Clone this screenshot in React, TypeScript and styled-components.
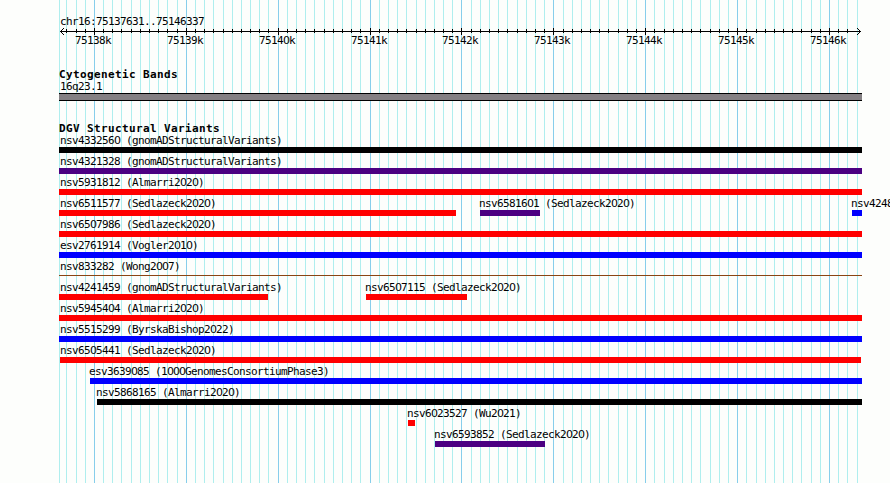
import React from "react";
import styled, { createGlobalStyle } from "styled-components";

const GlobalStyle = createGlobalStyle`
  body { margin: 0; background: #fdfefc; }
`;

const LEFT = 59;
const RIGHT = 862;

const Page = styled.main`
  position: relative;
  width: 890px;
  height: 483px;
  overflow: hidden;
  color: #000;
  font-family: "DejaVu Sans Mono", monospace;
  font-size: 11px;
  line-height: 13px;
  letter-spacing: -0.6225px;
  white-space: pre;
`;

const GridLines = styled.svg`
  position: absolute;
  inset: 0;
  shape-rendering: crispEdges;
`;

const Tracks = styled.div`
  position: relative;
  display: flex;
  flex-direction: column;
  width: ${RIGHT - LEFT}px;
  padding: 15px 0 0 ${LEFT}px;
`;

const Region = styled.div`
  height: 13px;
  padding-left: 1px;
`;

const Scale = styled.svg`
  display: block;
  height: 7px;
  shape-rendering: crispEdges;
`;

const ScaleLabels = styled.div`
  display: flex;
  height: 13px;
  margin-top: -1px;
`;

const ScaleLabel = styled.span<{ $gap: number }>`
  flex: none;
  width: 36px;
  margin-left: ${(p) => p.$gap}px;
`;

const Track = styled.section<{ $top: number }>`
  margin-top: ${(p) => p.$top}px;
`;

const Title = styled.h2`
  height: 12px;
  margin: 0;
  font-size: 11px;
  line-height: 13px;
  font-weight: bold;
  letter-spacing: 0.3775px;
`;

const Band = styled.div`
  height: 6px;
  border: solid #000;
  border-width: 1px 0;
  background: #848083;
`;

const Lane = styled.div`
  display: flex;
  height: 21px;
`;

const Feature = styled.div<{ $gap: number; $width: number }>`
  flex: none;
  width: ${(p) => p.$width}px;
  margin-left: ${(p) => p.$gap}px;
`;

const Name = styled.div<{ $shift: number }>`
  height: 13px;
  margin-left: ${(p) => p.$shift}px;
`;

const Bar = styled.div<{ $color: string; $thin?: boolean }>`
  height: ${(p) => (p.$thin ? 1 : 6)}px;
  margin-top: ${(p) => (p.$thin ? 2 : 0)}px;
  background: ${(p) => p.$color};
`;

const Digit = styled.span`
  font-family: "DejaVu Sans", sans-serif;
  letter-spacing: -1px;
`;

const BLACK = "#000000";
const INDIGO = "#4b0082";
const RED = "#ff0000";
const BLUE = "#0000ff";
const BROWN = "#8b4513";

type Variant = { name: string; start: number; end: number; color: string; thin?: boolean };

const v = (name: string, color: string, start = LEFT, end = RIGHT, thin = false): Variant => ({
  name, color, start, end, thin,
});

const lanes: Variant[][] = [
  [v("nsv4332560 (gnomADStructuralVariants)", BLACK)],
  [v("nsv4321328 (gnomADStructuralVariants)", INDIGO)],
  [v("nsv5931812 (Almarri2020)", RED)],
  [
    v("nsv6511577 (Sedlazeck2020)", RED, 59, 456),
    v("nsv6581601 (Sedlazeck2020)", INDIGO, 480, 540),
    v("nsv4248", BLUE, 852, 862),
  ],
  [v("nsv6507986 (Sedlazeck2020)", RED)],
  [v("esv2761914 (Vogler2010)", BLUE)],
  [v("nsv833282 (Wong2007)", BROWN, LEFT, RIGHT, true)],
  [
    v("nsv4241459 (gnomADStructuralVariants)", RED, 59, 268),
    v("nsv6507115 (Sedlazeck2020)", RED, 366, 467),
  ],
  [v("nsv5945404 (Almarri2020)", RED)],
  [v("nsv5515299 (ByrskaBishop2022)", BLUE)],
  [v("nsv6505441 (Sedlazeck2020)", RED, 60, 861)],
  [v("esv3639085 (1000GenomesConsortiumPhase3)", BLUE, 90)],
  [v("nsv5868165 (Almarri2020)", BLACK, 97)],
  [v("nsv6023527 (Wu2021)", RED, 408, 415)],
  [v("nsv6593852 (Sedlazeck2020)", INDIGO, 435, 545)],
];

const ticks = Array.from({ length: 87 }, (_, i) => ({
  x: Math.floor(94.4 + (i - 3) * 9.189),
  major: (i - 3) % 10 === 0,
}));
const majors = ticks.filter((t) => t.major);

/* Zeros are set in the proportional face, whose zero is open. */
const Text = ({ children }: { children: string }) => (
  <>
    {children.split(/(0+)/).map((part, i) => (i % 2 ? <Digit key={i}>{part}</Digit> : part))}
  </>
);

const nameShift = (start: number) => (start === LEFT ? 1 : start === LEFT + 1 ? 0 : -1);

export default function App() {
  return (
    <>
      <GlobalStyle />
      <Page>
        <GridLines width="890" height="483">
          <rect x={LEFT} y="0" width="1" height="483" fill="#afeeee" />
          {ticks.map((t) => t.x < RIGHT && (
            <rect key={t.x} x={t.x} y="0" width="1" height="483" fill={t.major ? "#87ceeb" : "#afeeee"} />
          ))}
        </GridLines>
        <Tracks>
          <Region><Text>chr16:75137631..75146337</Text></Region>
          <Scale width={RIGHT - LEFT} height="7" viewBox={`${LEFT} 28 ${RIGHT - LEFT} 7`}>
            <rect x="60" y="31" width="801" height="1" />
            {[1, 2, 3].map((d) => (
              <React.Fragment key={d}>
                <rect x={60 + d} y={31 - d} width="1" height="1" />
                <rect x={60 + d} y={31 + d} width="1" height="1" />
                <rect x={860 - d} y={31 - d} width="1" height="1" />
                <rect x={860 - d} y={31 + d} width="1" height="1" />
              </React.Fragment>
            ))}
            {ticks.map((t) => t.x < 857 && (
              <rect key={t.x} x={t.x} y={t.major ? 28 : 29} width="1" height={t.major ? 7 : 4} />
            ))}
          </Scale>
          <ScaleLabels>
            {majors.map((t, i) => (
              <ScaleLabel key={t.x} $gap={i ? t.x - majors[i - 1].x - 36 : t.x - 19 - LEFT}>
                <Text>{`${75138 + i}k`}</Text>
              </ScaleLabel>
            ))}
          </ScaleLabels>
          <Track $top={21}>
            <Title>Cytogenetic Bands</Title>
            <Name $shift={1}><Text>16q23.1</Text></Name>
            <Band />
          </Track>
          <Track $top={21}>
            <Title>DGV Structural Variants</Title>
            {lanes.map((lane, i) => (
              <Lane key={i}>
                {lane.map((f, j) => (
                  <Feature key={f.name} $gap={f.start - (j ? lane[j - 1].end : LEFT)} $width={f.end - f.start}>
                    <Name $shift={nameShift(f.start)}><Text>{f.name}</Text></Name>
                    <Bar $color={f.color} $thin={f.thin} />
                  </Feature>
                ))}
              </Lane>
            ))}
          </Track>
        </Tracks>
      </Page>
    </>
  );
}
